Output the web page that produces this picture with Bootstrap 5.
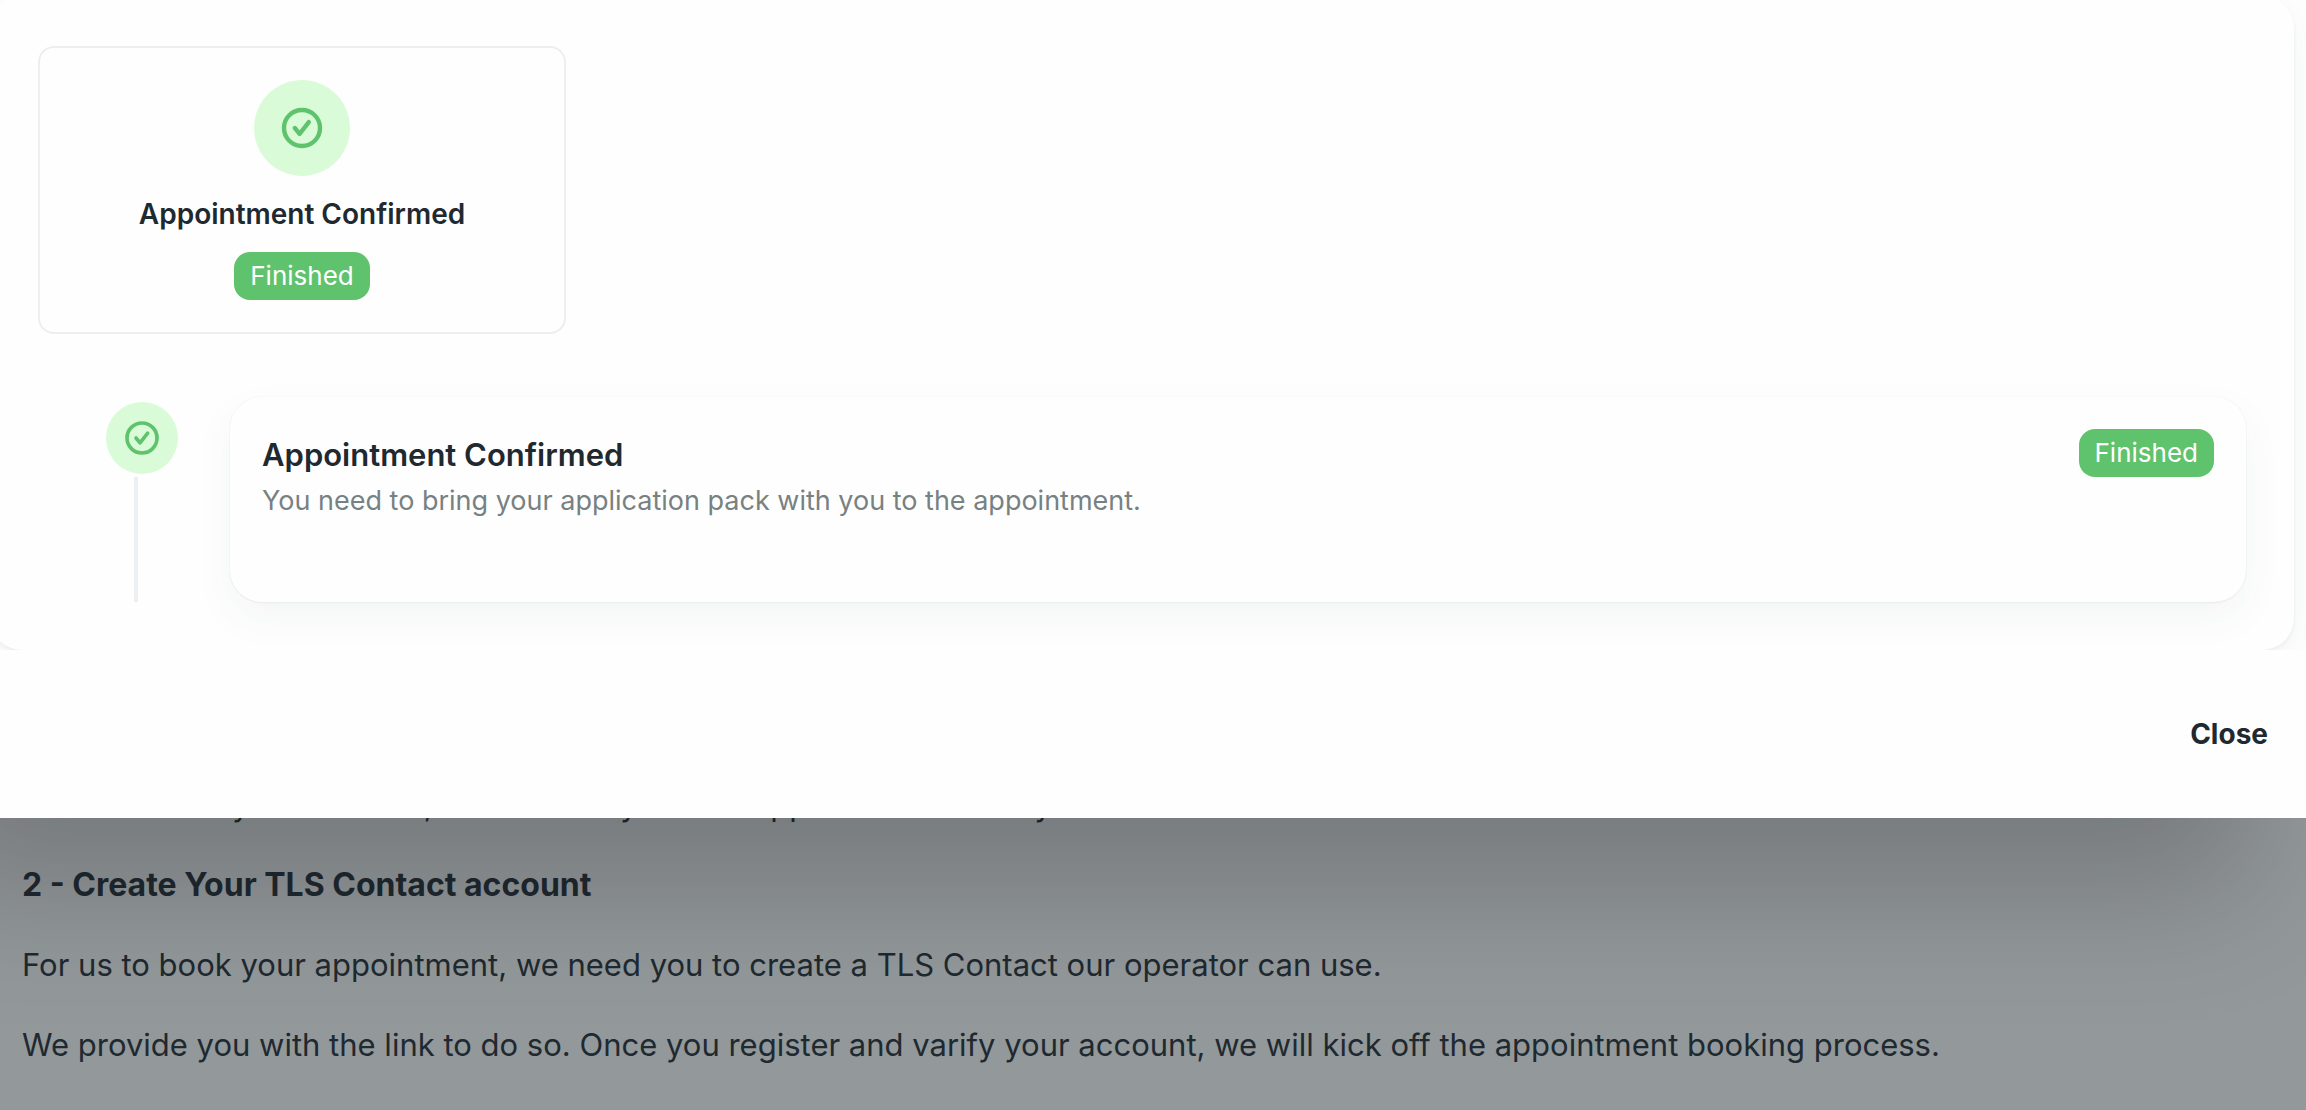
<!DOCTYPE html>
<html lang="en">
<head>
<meta charset="utf-8">
<meta name="viewport" content="width=device-width, initial-scale=1">
<title>Application status</title>
<link href="https://cdn.jsdelivr.net/npm/bootstrap@5.3.0/dist/css/bootstrap.min.css" rel="stylesheet">
<style>
  body { font-family: Inter, "Liberation Sans", sans-serif; background: #93989b; color: #1f2930; overflow-x: hidden; }
  .status-dialog { margin-left: -140px; background: #fefefe; z-index: 1; box-shadow: 0 128px 128px -56px rgba(0, 0, 0, .2); }
  .dialog-scroll { overflow: hidden; padding: 0 12px 0 130px; }
  .status-panel { margin-top: -4px; padding: 50px 48px 48px; border-radius: 32px; box-shadow: 0 2px 4px rgba(31, 60, 60, .06), 0 12px 40px rgba(31, 70, 60, .05); }
  .step-tile { width: 528px; height: 288px; padding: 32px; border: 2px solid #ebeff2; border-radius: 16px; }
  .step-icon { width: 96px; height: 96px; background: #dafbd8; color: #5fc36d; }
  .step-icon svg { width: 48px; height: 48px; }
  .step-icon.small-icon { width: 72px; height: 72px; }
  .small-icon svg { width: 40px; height: 40px; }
  .tile-title { font-size: 28px; line-height: 44px; font-weight: 600; }
  .state-pill { font-size: 26px; line-height: 32px; padding: 8px 16px; border-radius: 16px; background: #5fc36d; color: #fff; }
  .timeline { margin-top: 63px; gap: 52px; padding-left: 68px; }
  .timeline-line { width: 4px; margin: 3px 0 0 28px; background: #ebeff2; }
  .timeline-rail { padding-top: 5px; }
  .step-card { padding: 32px; min-height: 205px; border-radius: 32px; background: #fefefe; box-shadow: 0 0 2px rgba(31, 70, 60, .06), 0 1px 2px rgba(31, 70, 60, .05), 0 16px 40px rgba(31, 80, 60, .05); }
  .card-heading { font-size: 31px; line-height: 52px; font-weight: 600; }
  .card-copy { font-size: 27px; line-height: 40px; color: #788182; }
  .dialog-foot { padding: 56px 38px 56px; }
  .close-link { font-size: 28px; line-height: 56px; font-weight: 700; color: #1f2930; }
  .guide { margin-top: -37px; padding: 0 22px; }
  .guide p, .guide h2 { margin: 0 0 32px; font-size: 31px; line-height: 48px; }
  .guide h2 { font-size: 32px; }
</style>
<script src="https://cdn.jsdelivr.net/npm/bootstrap@5.3.0/dist/js/bootstrap.bundle.min.js"></script>
</head>
<body>
<section class="status-dialog position-relative" role="dialog" aria-label="Application status">
  <div class="dialog-scroll">
    <div class="status-panel">
      <div class="step-tile d-flex flex-column align-items-center">
        <div class="step-icon rounded-circle d-flex align-items-center justify-content-center">
          <svg viewBox="0 0 24 24" fill="none" stroke="currentColor" stroke-width="2.2" stroke-linecap="round" stroke-linejoin="round" aria-hidden="true"><circle cx="12" cy="12" r="9"/><path d="M8.4 12l2.4 2.9 4.6-5.8"/></svg>
        </div>
        <div class="tile-title mt-3">Appointment Confirmed</div>
        <span class="state-pill mt-3">Finished</span>
      </div>
      <div class="timeline d-flex">
        <div class="timeline-rail d-flex flex-column">
          <div class="step-icon small-icon rounded-circle d-flex align-items-center justify-content-center">
            <svg viewBox="0 0 24 24" fill="none" stroke="currentColor" stroke-width="2.2" stroke-linecap="round" stroke-linejoin="round" aria-hidden="true"><circle cx="12" cy="12" r="9"/><path d="M8.4 12l2.4 2.9 4.6-5.8"/></svg>
          </div>
          <div class="timeline-line flex-grow-1"></div>
        </div>
        <div class="step-card flex-grow-1 d-flex justify-content-between align-items-start">
          <div>
            <h2 class="card-heading m-0">Appointment Confirmed</h2>
            <p class="card-copy m-0">You need to bring your application pack with you to the appointment.</p>
          </div>
          <span class="state-pill">Finished</span>
        </div>
      </div>
    </div>
  </div>
  <footer class="dialog-foot d-flex justify-content-end">
    <button type="button" class="close-link btn p-0 border-0">Close</button>
  </footer>
</section>
<main class="guide">
  <p>Once we hold your address, we will take you with appointment dates you can use.</p>
  <h2 class="fw-bold">2 - Create Your TLS Contact account</h2>
  <p>For us to book your appointment, we need you to create a TLS Contact our operator can use.</p>
  <p>We provide you with the link to do so. Once you register and varify your account, we will kick off the appointment booking process.</p>
</main>
</body>
</html>
